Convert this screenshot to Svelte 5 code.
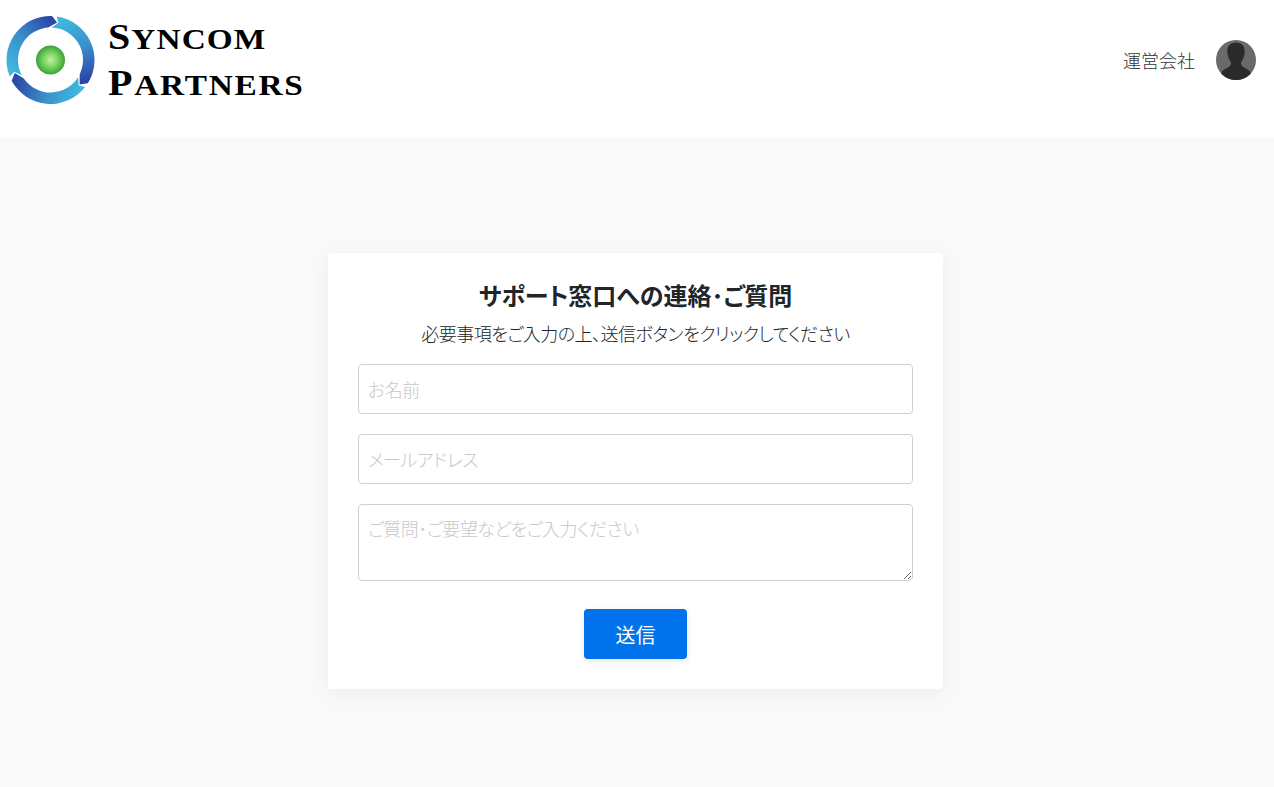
<script lang="ts">
	const cx = 50.5;
	const cy = 60;

	function pt(radius: number, deg: number) {
		const a = (deg * Math.PI) / 180;
		return `${(cx + radius * Math.cos(a)).toFixed(2)} ${(cy + radius * Math.sin(a)).toFixed(2)}`;
	}

	// one arrow of the ring, head pointing clockwise at -80deg
	const head = -80;
	const tail = head - 120;
	const arrow = [
		`M ${pt(44, tail - 2)}`,
		`A 44 44 0 0 1 ${pt(44, head - 8)}`,
		`L ${pt(38, head)}`,
		`L ${pt(32.5, head - 14)}`,
		`A 32.5 32.5 0 0 0 ${pt(32.5, tail - 8)}`,
		`L ${pt(38, tail + 2)}`,
		'Z'
	].join(' ');
</script>

<header class="topbar">
	<a class="brand" href="#top">
		<svg class="mark" width="100" height="120" viewBox="0 0 100 120" aria-hidden="true">
			<defs>
				<linearGradient id="ringFill" gradientUnits="userSpaceOnUse" x1="8" y1="72" x2="56" y2="24">
					<stop offset="0" stop-color="#3fbce0" />
					<stop offset="0.5" stop-color="#3a8fca" />
					<stop offset="1" stop-color="#2b45a6" />
				</linearGradient>
				<radialGradient id="dotFill" cx="0.5" cy="0.5" r="0.5">
					<stop offset="0" stop-color="#c4f29a" />
					<stop offset="0.55" stop-color="#74d05c" />
					<stop offset="1" stop-color="#38a23c" />
				</radialGradient>
			</defs>
			{#each [0, 120, 240] as angle}
				<path d={arrow} fill="url(#ringFill)" transform="rotate({angle} {cx} {cy})" />
			{/each}
			<circle {cx} {cy} r="14.5" fill="url(#dotFill)" />
		</svg>
		<div class="wordmark">
			<span>Syncom</span>
			<span class="second">Partners</span>
		</div>
	</a>
	<nav class="nav">
		<a href="#top">運営会社</a>
		<svg class="avatar" width="40" height="40" viewBox="0 0 40 40" aria-hidden="true">
			<defs>
				<clipPath id="avatarClip"><circle cx="20" cy="20" r="20" /></clipPath>
			</defs>
			<g clip-path="url(#avatarClip)">
				<rect width="40" height="40" fill="#6a6a6a" />
				<path
					d="M20 2.500c-5.500 0-8.700 3.500-8.700 8.500 0 4 1.200 7.500 3 10 1 1.500 1 3.500-.3 5-1.500 1.700-6 3-8 5.500-.8 1-1 2.500-1 8.500h30c0-6-.2-7.500-1-8.500-2-2.500-6.500-3.800-8-5.500-1.300-1.500-1.300-3.500-.3-5 1.800-2.500 3-6 3-10 0-5-3.200-8.500-8.700-8.500z"
					fill="#2a2a2a"
				/>
			</g>
		</svg>
	</nav>
</header>

<main class="content">
	<form class="card" onsubmit={(e) => e.preventDefault()}>
		<h1>サポート窓口への連絡･ご質問</h1>
		<p>必要事項をご入力の上、送信ボタンをクリックしてください</p>
		<input type="text" placeholder="お名前" />
		<input type="email" placeholder="メールアドレス" />
		<textarea placeholder="ご質問･ご要望などをご入力ください"></textarea>
		<button type="submit">送信</button>
	</form>
</main>

<style>
	:global(body) {
		background: #f9f9f9;
		font-family: "Noto Sans CJK JP", "Noto Sans", sans-serif;
		font-feature-settings: "palt";
		color: #212529;
	}

	.topbar {
		display: flex;
		justify-content: space-between;
		align-items: center;
		height: 138px;
		background: #fff;
		padding: 0 18px 18px 0;
		box-sizing: border-box;
	}

	.brand {
		display: flex;
		text-decoration: none;
		color: #000;
		height: 120px;
	}

	.wordmark {
		display: flex;
		flex-direction: column;
		margin: 15px 0 0 8px;
		font-family: "Liberation Serif", serif;
		font-weight: 700;
		font-size: 30px;
		line-height: 45px;
		text-transform: uppercase;
		letter-spacing: 1px;
		transform: scaleX(1.11);
		transform-origin: left;
	}

	.wordmark span {
		display: block;
	}

	.wordmark span::first-letter {
		font-size: 36px;
	}

	.wordmark .second {
		letter-spacing: 1.6px;
	}

	.nav {
		display: flex;
		align-items: center;
		gap: 21px;
	}

	.nav a {
		color: #333;
		font-size: 18px;
		font-weight: 300;
		text-decoration: none;
		font-feature-settings: normal;
	}

	.content {
		display: flex;
		justify-content: center;
		padding: 115px 3px 98px 0;
	}

	.card {
		display: flex;
		flex-direction: column;
		align-items: center;
		box-sizing: border-box;
		width: 615px;
		height: 436px;
		padding: 26px 30px 30px;
		background: #fff;
		border-radius: 4px;
		box-shadow: 0 4px 20px rgba(0, 0, 0, 0.05);
	}

	h1 {
		margin: 0;
		font-size: 24px;
		line-height: 32px;
		font-weight: 700;
		color: #212529;
	}

	p {
		margin: 10px 0 19px;
		font-size: 18px;
		line-height: 24px;
		font-weight: 300;
		letter-spacing: -0.5px;
		color: #212529;
	}

	input,
	textarea {
		display: block;
		box-sizing: border-box;
		width: 100%;
		margin: 0 0 20px;
		padding: 9px;
		border: 1px solid #d0d0d0;
		border-radius: 4px;
		background: #fff;
		font-family: inherit;
		font-feature-settings: "palt";
		font-size: 18px;
		font-weight: 300;
		letter-spacing: -0.5px;
		outline: none;
	}

	input {
		height: 50px;
	}

	textarea {
		height: 77px;
		margin-bottom: 28px;
		line-height: 26px;
		padding-top: 10px;
	}

	input::placeholder,
	textarea::placeholder {
		color: #c8c8c8;
	}

	button {
		width: 103px;
		height: 50px;
		border: none;
		border-radius: 4px;
		background: #0073ec;
		color: #fff;
		font-family: inherit;
		font-size: 20px;
		box-shadow: 0 2px 6px rgba(0, 0, 0, 0.1);
		cursor: pointer;
	}
</style>
